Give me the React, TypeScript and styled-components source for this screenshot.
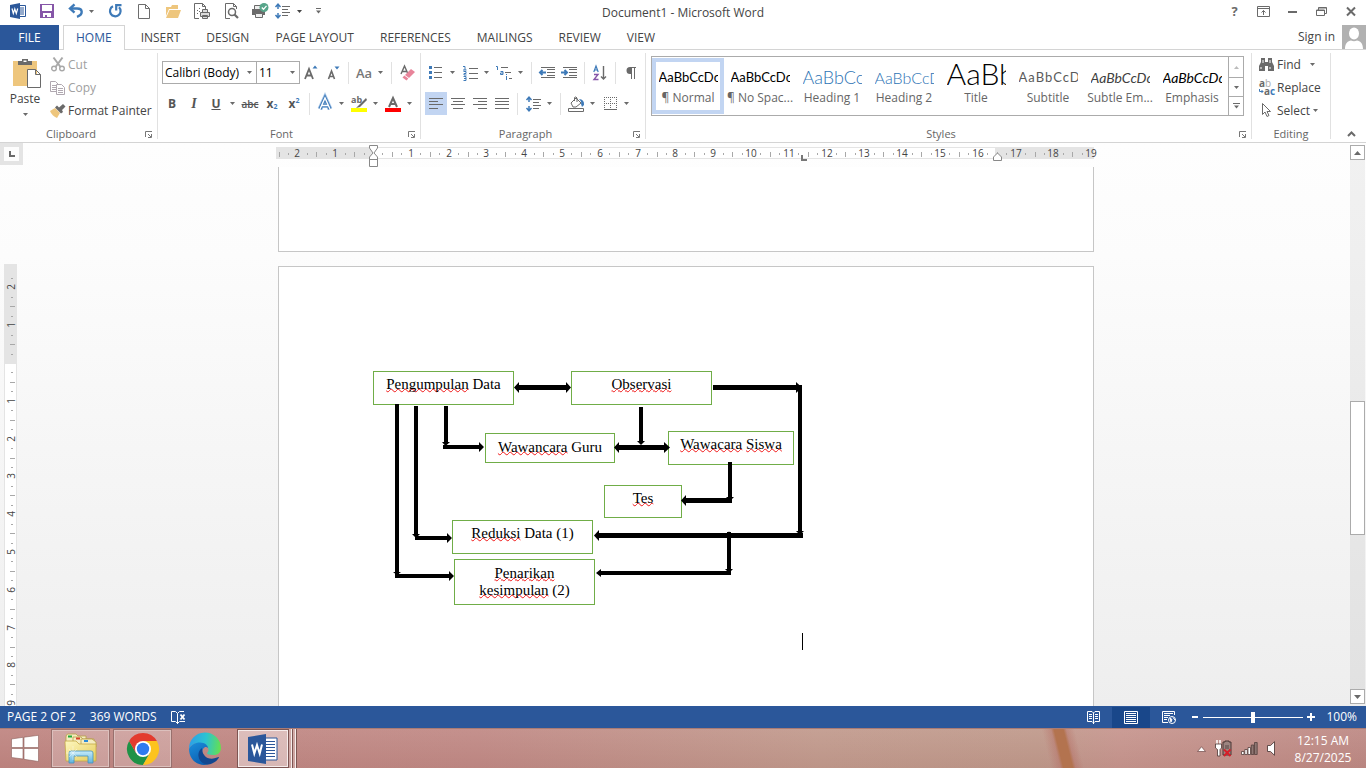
import React from "react";
import styled, { createGlobalStyle, css } from "styled-components";

const INK = "#444444";
const GREY = "#6a6a6a";
const BLUE = "#2b579a";
const ACCENT = "#3e7ab8";

const Global = createGlobalStyle`
  * { box-sizing: border-box; }
  html, body { margin: 0; height: 100%; overflow: hidden; }
  body { font-family: "Open Sans", "Noto Sans", sans-serif; font-size: 12px; line-height: 16px; color: ${INK}; }
  #root { height: 100%; }
  button, select, input { font: inherit; color: inherit; }
  svg { display: block; flex: none; overflow: visible; }
`;

/* ---------- shared parts ---------- */

const Window = styled.div`
  display: flex;
  flex-direction: column;
  height: 100vh;
  background: #fff;
`;

const PlainButton = styled.button`
  display: flex;
  align-items: center;
  justify-content: center;
  padding: 0;
  border: 0;
  background: transparent;
`;

const Caret = ({ color = GREY }: { color?: string }) => (
  <svg width="5" height="3" viewBox="0 0 5 3" fill={color}>
    <path d="M0 0H5L2.5 3Z" />
  </svg>
);

/* ---------- title bar ---------- */

const TitleBar = styled.header`
  display: grid;
  grid-template-columns: 1fr auto 1fr;
  align-items: center;
  height: 25px;
  flex: none;
`;

const QuickAccess = styled.div`
  display: flex;
  align-items: center;
  align-self: start;
  gap: 13px;
  padding-left: 10px;
  height: 22px;
`;

const QuickButton = styled(PlainButton)<{ $slim?: boolean }>`
  width: ${(p) => (p.$slim ? 6 : 16)}px;
  height: 22px;
`;

const QuickSet = styled.div<{ $gap: number }>`
  display: flex;
  align-items: center;
  gap: ${(p) => p.$gap}px;
`;

const Title = styled.h1`
  margin: 0;
  font-size: 12px;
  font-weight: 400;
`;

const WindowControls = styled.div`
  display: flex;
  align-self: start;
  justify-content: flex-end;
  height: 22px;
  padding-right: 1px;
`;

const WindowButton = styled(PlainButton)`
  width: 29px;
  font-weight: 700;
  font-size: 13px;
  color: ${GREY};
`;

const WordSmall = () => (
  <svg width="16" height="16" viewBox="0 0 16 16">
    <path d="M9 2.5H15.5V13.5H9Z" fill="#fff" stroke={BLUE} />
    <path d="M10 5H14M10 7H14M10 9H14M10 11H14" stroke={BLUE} />
    <path d="M0 2L10 0V16L0 14Z" fill={BLUE} />
    <path d="M2 5.5L3.3 10.5L4.8 6L6.3 10.5L7.7 5.5" fill="none" stroke="#fff" strokeWidth="1.2" />
  </svg>
);
const SaveIcon = () => (
  <svg width="14" height="14" viewBox="0 0 14 14">
    <path d="M0 0H14V14H0ZM2 1V7H12V1ZM3 9V13H5V11H7V13H11V9Z" fill="#8656a8" fillRule="evenodd" />
  </svg>
);
const UndoIcon = () => (
  <svg width="16" height="14" viewBox="0 0 16 14" fill="none" stroke={ACCENT} strokeWidth="2.400">
    <path d="M2 4.500H9C15 4.500 15.500 10.500 9 12.800" />
    <path d="M6.500 .3L2 4.500L6.500 8.700" />
  </svg>
);
const RedoIcon = () => (
  <svg width="15" height="14" viewBox="0 0 15 14" fill="none" stroke={ACCENT} strokeWidth="2.200">
    <path d="M5 2.200A5.300 5.300 0 1 0 11 3.200" />
    <path d="M8.200 6.500V1.200H13.500" />
  </svg>
);
const NewIcon = () => (
  <svg width="14" height="15" viewBox="0 0 14 15" fill="#fff" stroke="#6d6d6d">
    <path d="M1.500 .5H8.500L12.500 4.500V14.500H1.500ZM8.500 .5V4.500H12.500" />
  </svg>
);
const OpenIcon = () => (
  <svg width="16" height="13" viewBox="0 0 16 13" fill="#eec67d">
    <path d="M1 11V2H6L7 0H13V4H4Z" />
    <path d="M4.500 5H16L13 13H1Z" />
  </svg>
);
const QuickPrintIcon = () => (
  <svg width="16" height="16" viewBox="0 0 16 16" fill="none" stroke={GREY}>
    <path d="M5 15.500H.5V.5H8.500L11.500 3.500V6M8.500 .5V3.500H11.500" />
    <path d="M3 7.500H4M3 10.500H4M5 8.500H6M5 5.500H6" />
    <path d="M6.500 9.500H15.500V13.500H6.500ZM8.500 9.500V6.500H13.500V9.500M8.500 12.500H13.500V15.500H8.500Z" fill="#ddd" />
  </svg>
);
const PreviewIcon = () => (
  <svg width="15" height="16" viewBox="0 0 15 16" fill="none" stroke={GREY}>
    <path d="M6 15.500H1.500V.5H9.500L12.500 3.500V6M9.500 .5V3.500H12.500" />
    <circle cx="8" cy="9" r="3.500" strokeWidth="1.500" />
    <path d="M10.500 11.500L14 15" strokeWidth="2.200" />
  </svg>
);
const PrintCheckIcon = () => (
  <svg width="17" height="16" viewBox="0 0 17 16">
    <path d="M0 6H13V12H0Z" fill={GREY} />
    <path d="M2.500 6V2.500H9.500V6M3.500 10.500H10.500V14.500H3.500Z" fill="#eee" stroke={GREY} />
    <circle cx="12" cy="4.500" r="4.500" fill="#57a58a" />
    <path d="M9.800 4.500L11.500 6.300L14.500 2.800" fill="none" stroke="#fff" strokeWidth="1.300" />
  </svg>
);
const LineSpacingIcon = () => (
  <svg width="15" height="16" viewBox="0 0 15 16" fill="none">
    <path d="M3 2V6M3 10V14M.5 4L3 1.200L5.500 4M.5 12L3 14.800L5.500 12" stroke={ACCENT} strokeWidth="1.500" />
    <path d="M7 3.500H15M7 6.500H13M7 9.500H15M7 12.500H13" stroke={GREY} />
  </svg>
);

function TopBar() {
  return (
    <TitleBar>
      <QuickAccess>
        <QuickButton aria-label="Word menu"><WordSmall /></QuickButton>
        <QuickButton aria-label="Save"><SaveIcon /></QuickButton>
        <QuickSet $gap={4}>
          <QuickButton aria-label="Undo"><UndoIcon /></QuickButton>
          <QuickButton $slim aria-label="Undo history"><Caret /></QuickButton>
        </QuickSet>
        <QuickButton aria-label="Repeat"><RedoIcon /></QuickButton>
        <QuickButton aria-label="New"><NewIcon /></QuickButton>
        <QuickButton aria-label="Open"><OpenIcon /></QuickButton>
        <QuickButton aria-label="Quick print"><QuickPrintIcon /></QuickButton>
        <QuickButton aria-label="Print preview"><PreviewIcon /></QuickButton>
        <QuickSet $gap={6}>
          <QuickButton aria-label="Print and check"><PrintCheckIcon /></QuickButton>
          <QuickButton aria-label="Line spacing"><LineSpacingIcon /></QuickButton>
          <QuickButton $slim aria-label="Line spacing options"><Caret color={INK} /></QuickButton>
        </QuickSet>
        <QuickButton $slim aria-label="Customize toolbar">
          <svg width="7" height="6" viewBox="0 0 7 6">
            <path d="M1 .5H6" stroke={GREY} />
            <path d="M1 2.500H6L3.500 5.500Z" fill={GREY} />
          </svg>
        </QuickButton>
      </QuickAccess>
      <Title>Document1 - Microsoft Word</Title>
      <WindowControls>
        <WindowButton aria-label="Help">?</WindowButton>
        <WindowButton aria-label="Ribbon display options">
          <svg width="13" height="11" viewBox="0 0 13 11" fill="none" stroke={GREY}>
            <path d="M.5 .5H12.500V10.500H.5ZM.5 2.500H12.500M6.500 9V4.500M4.500 6.500L6.500 4.500L8.500 6.500" />
          </svg>
        </WindowButton>
        <WindowButton aria-label="Minimize">
          <svg width="9" height="3" viewBox="0 0 9 3"><path d="M0 1H9V3H0Z" fill={GREY} /></svg>
        </WindowButton>
        <WindowButton aria-label="Restore">
          <svg width="11" height="9" viewBox="0 0 11 9" fill="none" stroke={GREY}>
            <path d="M.5 3H8.500V8.500H.5ZM.5 3.500H8.500M2.500 3V.5H10.500V6.500H8.500M2.500 1H10.500" />
          </svg>
        </WindowButton>
        <WindowButton aria-label="Close">
          <svg width="10" height="9" viewBox="0 0 10 9"><path d="M1 .5L9 8.500M9 .5L1 8.500" stroke={GREY} strokeWidth="2" /></svg>
        </WindowButton>
      </WindowControls>
    </TitleBar>
  );
}

/* ---------- ribbon tabs ---------- */

const TabStrip = styled.nav`
  display: flex;
  height: 25px;
  flex: none;
  border-bottom: 1px solid #d4d4d4;
`;

const Tab = styled.button<{ $kind?: "file" | "active" }>`
  height: 25px;
  padding: 0 13px;
  border: 0;
  background: transparent;
  white-space: nowrap;
  ${(p) =>
    p.$kind === "file" &&
    css`
      width: 59px;
      margin-right: 4px;
      background: ${BLUE};
      color: #fff;
    `}
  ${(p) =>
    p.$kind === "active" &&
    css`
      padding: 0 12px;
      margin-right: 3px;
      border: 1px solid #d4d4d4;
      border-bottom: 0;
      background: #fff;
      color: ${BLUE};
    `}
`;

const Account = styled.div`
  display: flex;
  align-items: center;
  gap: 7px;
  margin-left: auto;
`;

const SignIn = styled.a`
  color: ${INK};
  text-decoration: none;
`;

function Tabs() {
  return (
    <TabStrip>
      <Tab $kind="file">FILE</Tab>
      <Tab $kind="active">HOME</Tab>
      {["INSERT", "DESIGN", "PAGE LAYOUT", "REFERENCES", "MAILINGS", "REVIEW", "VIEW"].map((t) => (
        <Tab key={t}>{t}</Tab>
      ))}
      <Account>
        <SignIn href="#signin">Sign in</SignIn>
        <svg width="24" height="24" viewBox="0 0 24 24">
          <path d="M0 0H24V24H0Z" fill="#b1b1b1" />
          <ellipse cx="12" cy="8.500" rx="5" ry="6" fill="#fff" />
          <path d="M3 24C3 18 6 16 9 15.500Q12 17 15 15.500C18 16 21 18 21 24Z" fill="#fff" />
        </svg>
      </Account>
    </TabStrip>
  );
}

/* ---------- ribbon ---------- */

const Ribbon = styled.section`
  display: flex;
  flex: none;
  height: 93px;
  padding: 3px 0;
  border-bottom: 1px solid #d4d4d4;
`;

const GroupBox = styled.section<{ $width?: number }>`
  display: flex;
  flex-direction: column;
  border-right: 1px solid #e1e1e1;
  ${(p) => (p.$width ? `width: ${p.$width}px; flex: none;` : "flex: 1; min-width: 0;")}
`;

const GroupBody = styled.div<{ $column?: boolean; $pad?: string }>`
  display: flex;
  flex-direction: ${(p) => (p.$column ? "column" : "row")};
  flex: 1;
  gap: ${(p) => (p.$column ? 8 : 0)}px;
  padding: ${(p) => p.$pad ?? "0"};
`;

const GroupFooter = styled.footer`
  display: flex;
  align-items: center;
  height: 10px;
  line-height: 10px;
  font-size: 11px;
  text-align: center;
  color: #666;
`;

const GroupName = styled.span`
  flex: 1;
`;

const Launcher = styled(PlainButton)`
  width: 15px;
  padding-right: 1px;
`;

const LauncherIcon = () => (
  <svg width="8" height="7" viewBox="0 0 8 7" fill="none" stroke="#777">
    <path d="M.5 6V.5H7M3 3L6 6M6.500 3V6.500H3" />
  </svg>
);

function Group(props: {
  label: string;
  width?: number;
  column?: boolean;
  pad?: string;
  launcher?: boolean;
  children: React.ReactNode;
}) {
  return (
    <GroupBox $width={props.width} aria-label={props.label}>
      <GroupBody $column={props.column} $pad={props.pad}>
        {props.children}
      </GroupBody>
      <GroupFooter>
        <GroupName>{props.label}</GroupName>
        {props.launcher && (
          <Launcher aria-label={`${props.label} settings`}>
            <LauncherIcon />
          </Launcher>
        )}
      </GroupFooter>
    </GroupBox>
  );
}

const PasteButton = styled(PlainButton)`
  flex-direction: column;
  justify-content: flex-start;
  width: 50px;
  height: 70px;
  padding-top: 5px;
`;

const PasteLabel = styled.span`
  margin: 2px 0 6px;
`;

const CommandList = styled.div`
  display: flex;
  flex-direction: column;
`;

const Command = styled.button<{ $muted?: boolean }>`
  display: flex;
  align-items: center;
  gap: 3px;
  height: 23px;
  padding: 0;
  border: 0;
  background: transparent;
  white-space: nowrap;
  color: ${(p) => (p.$muted ? "#a0a0a0" : INK)};
`;

const CommandIcon = styled.span`
  display: flex;
  justify-content: center;
  width: 15px;
`;

const CommandCaret = styled.span<{ $gap: number }>`
  padding-left: ${(p) => p.$gap}px;
`;

function Clipboard() {
  return (
    <Group label="Clipboard" width={158} launcher>
      <PasteButton>
        <svg width="33" height="31" viewBox="-4 0 33 31">
          <path d="M0 3H24V28H0Z" fill="#eec67d" />
          <path d="M5 7V3H9V1H15V3H19V7Z" fill={GREY} />
          <path d="M10.500 2.500H13.500V4H10.500Z" fill="#fff" />
          <path d="M14.500 11.500H22.500L27.500 16.500V29.500H14.500ZM22.500 11.500V16.500H27.500" fill="#fff" stroke={GREY} />
        </svg>
        <PasteLabel>Paste</PasteLabel>
        <Caret />
      </PasteButton>
      <CommandList>
        <Command $muted>
          <CommandIcon>
            <svg width="14" height="15" viewBox="0 0 14 15" fill="none" stroke="#a8a8a8" strokeWidth="1.400">
              <path d="M2.500 .5L9.500 10M11.500 .5L4.500 10" strokeWidth="2" />
              <circle cx="3" cy="11.500" r="2.300" />
              <circle cx="11" cy="11.500" r="2.300" />
            </svg>
          </CommandIcon>
          Cut
        </Command>
        <Command $muted>
          <CommandIcon>
            <svg width="15" height="14" viewBox="0 0 15 14" fill="#fff" stroke="#b0a8b0">
              <path d="M.5 .5H5.500L8.500 3.500V10.500H.5ZM2 4.500H6M2 6.500H6M2 8.500H6" />
              <path d="M6.500 3.500H11.500L14.500 6.500V13.500H6.500ZM8 7.500H13M8 9.500H13M8 11.500H13" />
            </svg>
          </CommandIcon>
          Copy
        </Command>
        <Command>
          <CommandIcon>
            <svg width="16" height="14" viewBox="0 0 16 14">
              <path d="M0 7L5 4L10 9L7 14Q2 12 0 7Z" fill="#eec67d" />
              <path d="M5 3.500L7 1.500L9 3.500L13 0L15.500 2.500L12 6L13 8L11 9.500Z" fill={GREY} />
            </svg>
          </CommandIcon>
          Format Painter
        </Command>
      </CommandList>
    </Group>
  );
}

const ToolRow = styled.div`
  display: flex;
  align-items: center;
  height: 23px;
`;

const Tool = styled.button<{ $on?: boolean }>`
  display: flex;
  align-items: center;
  justify-content: center;
  width: 22px;
  height: 23px;
  padding: 0;
  border: 0;
  font-size: 13px;
  color: #555;
  background: ${(p) => (p.$on ? "#c2d5f2" : "transparent")};
`;

const SplitCaret = styled(Tool)`
  width: 10px;
  margin-right: 2px;
`;

const ToolSeparator = styled.span`
  width: 1px;
  height: 22px;
  margin: 0 4px;
  background: #e1e1e1;
`;

const ComboPair = styled.div`
  display: flex;
  margin: 0 1px;
`;

const Combo = styled.label<{ $width: number }>`
  position: relative;
  width: ${(p) => p.$width}px;
  height: 23px;
  margin-right: -1px;
`;

const ComboSelect = styled.select`
  appearance: none;
  width: 100%;
  height: 23px;
  padding: 0 2px;
  border: 1px solid #ababab;
  border-radius: 0;
  background: #fff;
  color: #000;
`;

const ComboCaret = styled.span`
  position: absolute;
  right: 5px;
  top: 10px;
  pointer-events: none;
`;

const GlyphBold = styled.span`
  font-weight: 700;
  font-size: 12px;
`;
const GlyphItalic = styled.span`
  font: italic 700 14px "Liberation Serif", serif;
`;
const GlyphUnderline = styled.span`
  font-weight: 700;
  font-size: 12px;
  text-decoration: underline;
`;
const GlyphStrike = styled.span`
  font-weight: 600;
  font-size: 10px;
  text-decoration: line-through;
`;
const GlyphScript = styled.span<{ $up?: boolean }>`
  display: flex;
  align-items: ${(p) => (p.$up ? "flex-start" : "flex-end")};
  font-weight: 700;
  font-size: 12px;
  line-height: 14px;
  small {
    font-size: 7px;
    line-height: 8px;
    color: ${ACCENT};
  }
`;
const GlyphCase = styled.span`
  font-size: 13px;
  font-weight: 600;
  color: #777;
`;

function Split({ label, children }: { label: string; children: React.ReactNode }) {
  return (
    <>
      <Tool aria-label={label}>{children}</Tool>
      <SplitCaret aria-label={`${label} options`}>
        <Caret />
      </SplitCaret>
    </>
  );
}

function FontGroup() {
  return (
    <Group label="Font" width={263} column pad="8px 0 0 3px" launcher>
      <ToolRow>
        <ComboPair>
          <Combo $width={95}>
            <ComboSelect aria-label="Font" defaultValue="Calibri (Body)">
              <option>Calibri (Body)</option>
            </ComboSelect>
            <ComboCaret><Caret /></ComboCaret>
          </Combo>
          <Combo $width={44}>
            <ComboSelect aria-label="Font size" defaultValue="11">
              <option>11</option>
            </ComboSelect>
            <ComboCaret><Caret /></ComboCaret>
          </Combo>
        </ComboPair>
        <Tool aria-label="Grow font">
          <svg width="14" height="15" viewBox="0 0 14 15">
            <path d="M1 14L5 4L9 14M2.500 10.500H7.500" fill="none" stroke={GREY} strokeWidth="1.800" />
            <path d="M8.500 3.500L11 .5L13.500 3.500Z" fill={ACCENT} />
          </svg>
        </Tool>
        <Tool aria-label="Shrink font">
          <svg width="13" height="15" viewBox="0 0 13 15">
            <path d="M1.500 14L4.500 6L7.500 14M2.500 11.500H6.500" fill="none" stroke={GREY} strokeWidth="1.600" />
            <path d="M7.500 1.500H12.500L10 4.500Z" fill={ACCENT} />
          </svg>
        </Tool>
        <ToolSeparator />
        <Split label="Change case"><GlyphCase>Aa</GlyphCase></Split>
        <ToolSeparator />
        <Tool aria-label="Clear formatting">
          <svg width="15" height="16" viewBox="0 0 15 16">
            <path d="M1 9L4.500 1L8 9M2 6.500H7" fill="none" stroke={GREY} strokeWidth="1.400" />
            <path d="M11 4L15 7L9 13L5 10Z" fill="#e8849a" />
            <path d="M4.300 10.600L8.300 13.600L6.500 15.500L2.500 12.500Z" fill="#e8849a" />
          </svg>
        </Tool>
      </ToolRow>
      <ToolRow>
        <Tool aria-label="Bold"><GlyphBold>B</GlyphBold></Tool>
        <Tool aria-label="Italic"><GlyphItalic>I</GlyphItalic></Tool>
        <Split label="Underline"><GlyphUnderline>U</GlyphUnderline></Split>
        <Tool aria-label="Strikethrough"><GlyphStrike>abc</GlyphStrike></Tool>
        <Tool aria-label="Subscript"><GlyphScript>x<small>2</small></GlyphScript></Tool>
        <Tool aria-label="Superscript"><GlyphScript $up>x<small>2</small></GlyphScript></Tool>
        <ToolSeparator />
        <Split label="Text effects">
          <svg width="14" height="15" viewBox="0 0 14 15" fill="none">
            <path d="M2 13L7 2L12 13M4 9.500H10" stroke="#a9c8ea" strokeWidth="5" />
            <path d="M2 13L7 2L12 13M4 9.500H10" stroke={ACCENT} strokeWidth="3.400" />
            <path d="M2 13L7 2L12 13M4 9.500H10" stroke="#fff" strokeWidth="1.400" />
          </svg>
        </Split>
        <Split label="Text highlight color">
          <svg width="16" height="16" viewBox="0 0 16 16">
            <text x="0" y="7" fontSize="9" fontWeight="700" fill={GREY}>ab</text>
            <path d="M15 2L8 9L5 12L9 11L16 4Z" fill={GREY} />
            <path d="M0 12H16V16H0Z" fill="#ffff00" />
          </svg>
        </Split>
        <Split label="Font color">
          <svg width="16" height="16" viewBox="0 0 16 16">
            <path d="M4 11L8 2L12 11M5.500 8H10.500" fill="none" stroke={GREY} strokeWidth="2" />
            <path d="M0 12H16V16H0Z" fill="#ff0000" />
          </svg>
        </Split>
      </ToolRow>
    </Group>
  );
}

const AlignIcon = ({ d }: { d: string }) => (
  <svg width="14" height="11" viewBox="0 0 14 11" stroke={GREY}>
    <path d={d} />
  </svg>
);

const IndentIcon = ({ flip }: { flip?: boolean }) => (
  <svg width="16" height="11" viewBox="0 0 16 11" fill="none">
    <path d="M2 .5H16M8 2.500H16M8 5.500H16M8 8.500H16M2 10.500H16" stroke={GREY} />
    <path
      d={flip ? "M0 5.500H6M3.500 3L6 5.500L3.500 8" : "M1 5.500H7M3.500 3L1 5.500L3.500 8"}
      stroke={ACCENT}
      strokeWidth="2"
    />
  </svg>
);

function ParagraphGroup() {
  return (
    <Group label="Paragraph" width={225} column pad="8px 0 0 4px" launcher>
      <ToolRow>
        <Split label="Bullets">
          <svg width="14" height="15" viewBox="0 0 14 15">
            <path d="M5 2.500H13M5 7.500H13M5 12.500H13" stroke={GREY} />
            <path d="M0 1H3V4H0ZM0 6H3V9H0ZM0 11H3V14H0Z" fill={ACCENT} />
          </svg>
        </Split>
        <Split label="Numbering">
          <svg width="15" height="16" viewBox="0 0 15 16">
            <path d="M6 3.500H15M6 8.500H15M6 13.500H15" stroke={GREY} />
            <path
              d="M0 1.500H2V5M0 5H3.500M.5 6.500H3V8.500H1V10H3.500M.5 11.500H3V15.500H.5M1 13.500H3"
              fill="none"
              stroke={ACCENT}
            />
          </svg>
        </Split>
        <Split label="Multilevel list">
          <svg width="16" height="16" viewBox="0 0 16 16">
            <path d="M5 2.500H12M9 7.500H15M13 13.500H16" stroke={GREY} />
            <path
              d="M0 1.500H1.500V5M4.500 6.500H7V9.500H4.500V8H7M10.500 11V15M10.500 9V10"
              fill="none"
              stroke={ACCENT}
            />
          </svg>
        </Split>
        <ToolSeparator />
        <Tool aria-label="Decrease indent"><IndentIcon /></Tool>
        <Tool aria-label="Increase indent"><IndentIcon flip /></Tool>
        <ToolSeparator />
        <Tool aria-label="Sort">
          <svg width="14" height="16" viewBox="0 0 14 16" fill="none">
            <path d="M.8 7L3 1L5.200 7M1.500 5H4.500" stroke={ACCENT} strokeWidth="1.200" />
            <path d="M1 9.500H5L1 14.500H5.500" stroke="#8656a8" strokeWidth="1.400" />
            <path d="M10.500 1V14M8 11.500L10.500 14L13 11.500" stroke={GREY} strokeWidth="1.400" />
          </svg>
        </Tool>
        <ToolSeparator />
        <Tool aria-label="Show formatting marks">
          <svg width="11" height="12" viewBox="0 0 11 12">
            <path d="M4 7A3.500 3.500 0 0 1 4 0H10V1H9V12H8V1H6V12H5V7Z" fill={GREY} />
          </svg>
        </Tool>
      </ToolRow>
      <ToolRow>
        <Tool $on aria-label="Align left"><AlignIcon d="M0 .5H14M0 3.500H9M0 6.500H14M0 10.500H9" /></Tool>
        <Tool aria-label="Center"><AlignIcon d="M0 .5H14M2 3.500H12M0 6.500H14M2 10.500H12" /></Tool>
        <Tool aria-label="Align right"><AlignIcon d="M0 .5H14M5 3.500H14M0 6.500H14M5 10.500H14" /></Tool>
        <Tool aria-label="Justify"><AlignIcon d="M0 .5H14M0 3.500H14M0 6.500H14M0 10.500H14" /></Tool>
        <ToolSeparator />
        <Split label="Line and paragraph spacing"><LineSpacingIcon /></Split>
        <ToolSeparator />
        <Split label="Shading">
          <svg width="17" height="16" viewBox="0 0 17 16" fill="none">
            <path d="M3 7L8 2L13 7L8 11H5ZM6.500 5V1.500Q8 0 9 2V6" stroke={GREY} />
            <path d="M11 3Q16.500 3.500 16 9L14 11L13 8Q14 6 11 3Z" fill={ACCENT} />
            <path d="M.5 12.500H15.500V15.500H.5Z" stroke={GREY} />
          </svg>
        </Split>
        <Split label="Borders">
          <svg width="13" height="13" viewBox="0 0 13 13" fill="none" stroke={GREY}>
            <path d="M.5 0V12M6.500 0V12M12.500 0V12M0 .5H13M0 6.500H13" strokeDasharray="1 1" />
            <path d="M0 12.500H13" />
          </svg>
        </Split>
      </ToolRow>
    </Group>
  );
}

const Gallery = styled.div`
  display: flex;
  flex: 1;
  min-width: 0;
  height: 60px;
  border: 1px solid #ababab;
  background: #fff;
`;

const GalleryItems = styled.div`
  display: flex;
  flex: 1;
  overflow: hidden;
`;

const StyleCard = styled.button<{ $on?: boolean }>`
  display: flex;
  flex-direction: column;
  align-items: center;
  flex: none;
  width: 72px;
  height: 56px;
  margin-top: 1px;
  padding: 0;
  border: 4px solid ${(p) => (p.$on ? "#c2d5f2" : "transparent")};
  background: transparent;
  color: #666;
  white-space: nowrap;
`;

const Sample = styled.span<{ $size: number; $color: string; $italic?: boolean; $light?: boolean; $wide?: boolean }>`
  width: 59px;
  height: 25px;
  margin-bottom: 3px;
  overflow: hidden;
  text-align: left;
  font-family: Lato, "Open Sans", sans-serif;
  font-size: ${(p) => p.$size}px;
  font-weight: ${(p) => (p.$light ? 300 : 400)};
  font-style: ${(p) => (p.$italic ? "italic" : "normal")};
  letter-spacing: ${(p) => (p.$wide ? "1px" : "normal")};
  line-height: ${(p) => (p.$size > 20 ? 23 : 31)}px;
  color: ${(p) => p.$color};
`;

const STYLES = [
  { name: "¶ Normal", sample: "AaBbCcDc", size: 13, color: "#000", on: true },
  { name: "¶ No Spac...", sample: "AaBbCcDc", size: 13, color: "#000" },
  { name: "Heading 1", sample: "AaBbCc", size: 18, color: "#2e74b5", light: true },
  { name: "Heading 2", sample: "AaBbCcD", size: 16, color: "#2e74b5", light: true },
  { name: "Title", sample: "AaBb", size: 30, color: "#000", light: true },
  { name: "Subtitle", sample: "AaBbCcD", size: 13, color: "#5a5a5a", wide: true },
  { name: "Subtle Em...", sample: "AaBbCcDc", size: 14, color: "#404040", italic: true },
  { name: "Emphasis", sample: "AaBbCcDc", size: 14, color: "#000", italic: true },
];

const GalleryScroll = styled.div`
  display: grid;
  grid-template-rows: 20px 19px 19px;
  width: 15px;
  border-left: 1px solid #ababab;
`;

const GalleryButton = styled(PlainButton)`
  & + & {
    border-top: 1px solid #ababab;
  }
`;

function StylesGroup() {
  return (
    <Group label="Styles" pad="3px 7px 0 5px" launcher>
      <Gallery>
        <GalleryItems>
          {STYLES.map((s) => (
            <StyleCard key={s.name} $on={s.on}>
              <Sample $size={s.size} $color={s.color} $italic={s.italic} $light={s.light} $wide={s.wide}>
                {s.sample}
              </Sample>
              {s.name}
            </StyleCard>
          ))}
        </GalleryItems>
        <GalleryScroll>
          <GalleryButton aria-label="Previous styles">
            <svg width="5" height="3" viewBox="0 0 5 3"><path d="M0 3H5L2.500 0Z" fill="#bbb" /></svg>
          </GalleryButton>
          <GalleryButton aria-label="Next styles"><Caret /></GalleryButton>
          <GalleryButton aria-label="More styles">
            <svg width="7" height="6" viewBox="0 0 7 6">
              <path d="M0 .5H7" stroke={GREY} />
              <path d="M1 2.500H6L3.500 5.500Z" fill={GREY} />
            </svg>
          </GalleryButton>
        </GalleryScroll>
      </Gallery>
    </Group>
  );
}

function EditingGroup() {
  return (
    <Group label="Editing" width={79} pad="0 0 0 7px">
      <CommandList>
        <Command>
          <CommandIcon>
            <svg width="15" height="13" viewBox="0 0 15 13" fill={GREY}>
              <path d="M2 0H6V4H9V0H13V4L15 8V13H9V8H6V13H0V8L2 4Z" />
              <path d="M2 9V11M11 9V11M4 2V5M11 2V5" stroke="#fff" />
            </svg>
          </CommandIcon>
          Find
          <CommandCaret $gap={6}><Caret /></CommandCaret>
        </Command>
        <Command>
          <CommandIcon>
            <svg width="16" height="15" viewBox="0 0 16 15" fontSize="10">
              <text x="0" y="7" fontWeight="700" fill={GREY}>a</text>
              <text x="6" y="7" fill="#aaa">b</text>
              <text x="5" y="15" fontWeight="700" fill={GREY}>a</text>
              <text x="11" y="15" fontWeight="700" fill={ACCENT}>c</text>
              <path d="M.5 9V11.500H4M2.500 10L4 11.500L2.500 13" fill="none" stroke={ACCENT} />
            </svg>
          </CommandIcon>
          Replace
        </Command>
        <Command>
          <CommandIcon>
            <svg width="9" height="15" viewBox="0 0 9 15">
              <path d="M.5 .5V11.500L3 9L5 13.500L7 12.500L5 8.500H8.500Z" fill="#fff" stroke={GREY} />
            </svg>
          </CommandIcon>
          Select
          <CommandCaret $gap={0}><Caret /></CommandCaret>
        </Command>
      </CommandList>
    </Group>
  );
}

const CollapseArea = styled.div`
  display: flex;
  align-items: flex-end;
  justify-content: flex-end;
  width: 35px;
  padding: 0 10px 2px 0;
`;

/* ---------- workspace ---------- */

const Workspace = styled.main`
  display: grid;
  grid-template-columns: 23px minmax(0, 1fr) 17px;
  flex: 1;
  min-height: 0;
  background: linear-gradient(#fefefe, #fcfcfc 20%, #eeeeee);
`;

const LeftRail = styled.div`
  display: flex;
  flex-direction: column;
  overflow: hidden;
`;

const TabCorner = styled.div`
  width: 23px;
  height: 22px;
  flex: none;
  padding: 4px;
  background: #e4e4e4;
  margin-bottom: 99px;
`;

const TabSelector = styled(PlainButton)`
  width: 15px;
  height: 14px;
  background: #fdfdfd;
`;

const VerticalRulerBox = styled.div`
  flex: 1;
  min-height: 0;
  padding-left: 4px;
  overflow: hidden;
`;

const RulerSvg = styled.svg`
  font-family: "Open Sans", sans-serif;
  font-size: 10px;
  text-anchor: middle;
`;

const CM = 37.8;

function rulerMarks(from: number, to: number) {
  const marks: { pos: number; kind: "number" | "half" | "quarter"; label: string }[] = [];
  for (let q = from * 4; q <= to * 4; q++) {
    if (q === 0) continue;
    const kind = q % 4 === 0 ? "number" : q % 2 === 0 ? "half" : "quarter";
    marks.push({ pos: Math.round((q * CM) / 4), kind, label: String(Math.abs(q / 4)) });
  }
  return marks;
}

function HorizontalRuler() {
  return (
    <RulerSvg width="822" height="24" viewBox="0 0 822 24" role="img" aria-label="Horizontal ruler">
      <path d="M0 4H818V16H0Z" fill="#e4e4e4" />
      <path d="M97 5H719V15H97Z" fill="#fff" />
      {rulerMarks(-2.5, 19).map((m) =>
        m.kind === "number" ? (
          <text key={m.pos} x={97 + m.pos} y="14" fill="#444">{m.label}</text>
        ) : (
          <rect key={m.pos} x={97 + m.pos} y={m.kind === "half" ? 9 : 10} width="1" height={m.kind === "half" ? 5 : 2} fill="#a8a8a8" />
        )
      )}
      <path d="M93.500 2.500H101.500V5L98 10L101.500 14V23.500H93.500V14L97 10L93.500 5ZM93.500 16.500H101.500" fill="#fff" stroke="#888" />
      <path d="M717.500 17.500V14L721.500 10L725.500 14V17.500Z" fill="#fff" stroke="#888" />
      <path d="M525 12H527V16H531V18H525Z" fill="#777" />
    </RulerSvg>
  );
}

function VerticalRuler() {
  return (
    <RulerSvg width="13" height="480" viewBox="0 0 13 480" role="img" aria-label="Vertical ruler">
      <path d="M0 0H13V480H0Z" fill="#e4e4e4" />
      <path d="M1 100H12V480H1Z" fill="#fff" />
      {rulerMarks(-2.25, 9).map((m) =>
        m.kind === "number" ? (
          <text key={m.pos} transform={`translate(11 ${99 + m.pos}) rotate(-90)`} fill="#444">{m.label}</text>
        ) : (
          <rect key={m.pos} x={m.kind === "half" ? 6 : 7} y={99 + m.pos} width={m.kind === "half" ? 5 : 2} height="1" fill="#a8a8a8" />
        )
      )}
    </RulerSvg>
  );
}

const DocumentColumn = styled.div`
  display: flex;
  flex-direction: column;
  align-items: center;
  min-width: 0;
  overflow: hidden;
`;

const RulerRow = styled.div`
  width: 820px;
  height: 24px;
  flex: none;
`;

const Sheet = styled.article<{ $tail?: boolean }>`
  width: 816px;
  flex: none;
  border: 1px solid #c6c6c6;
  background: #fff;
  ${(p) =>
    p.$tail
      ? css`
          height: 85px;
          margin-bottom: 14px;
          border-top: 0;
        `
      : css`
          height: 1056px;
          padding: 94px;
        `}
`;

/* ---------- diagram ---------- */

const Canvas = styled.div`
  position: relative;
  width: 440px;
  height: 300px;
`;

const Node = styled.div<{ $x: number; $y: number; $w: number; $h: number; $pad?: number }>`
  position: absolute;
  left: ${(p) => p.$x}px;
  top: ${(p) => p.$y}px;
  width: ${(p) => p.$w}px;
  height: ${(p) => p.$h}px;
  padding-top: ${(p) => p.$pad ?? 4}px;
  border: 1px solid #70ad47;
  background: #fff;
  color: #000;
  font: 15px/17px "Liberation Serif", serif;
  text-align: center;
`;

const Misspelt = styled.span`
  text-decoration: underline wavy #f01818 1px;
  text-decoration-skip-ink: none;
  text-underline-offset: -1px;
`;

const Connectors = styled.svg`
  position: absolute;
  left: 0;
  top: 0;
`;

const TextCursor = styled.span`
  position: absolute;
  left: 429px;
  top: 272px;
  width: 1px;
  height: 17px;
  background: #000;
`;

function Diagram() {
  return (
    <Canvas>
      <Node $x={0} $y={10} $w={141} $h={34}><Misspelt>Pengumpulan</Misspelt> Data</Node>
      <Node $x={198} $y={10} $w={141} $h={34}><Misspelt>Observasi</Misspelt></Node>
      <Node $x={112} $y={72} $w={130} $h={30} $pad={5}><Misspelt>Wawancara</Misspelt> Guru</Node>
      <Node $x={295} $y={70} $w={126} $h={34}><Misspelt>Wawacara</Misspelt> <Misspelt>Siswa</Misspelt></Node>
      <Node $x={231} $y={124} $w={78} $h={33}><Misspelt>Tes</Misspelt></Node>
      <Node $x={79} $y={159} $w={141} $h={34}><Misspelt>Reduksi</Misspelt> Data (1)</Node>
      <Node $x={81} $y={198} $w={141} $h={46} $pad={5}>
        <Misspelt>Penarikan</Misspelt>
        <br />
        <Misspelt>kesimpulan</Misspelt> (2)
      </Node>
      <Connectors width="440" height="300" viewBox="0 0 440 300" aria-hidden="true">
        <g fill="none" stroke="#000" strokeWidth="5">
          <path d="M145 26.500H194" />
          <path d="M340 26.500H425" />
          <path d="M245 86.500H292" />
          <path d="M312 139.500H359" />
          <path d="M225 174.500H430" />
        </g>
        <g fill="none" stroke="#000" strokeWidth="4">
          <path d="M427 24V172" />
          <path d="M356 171V210" />
          <path d="M226 212H358" />
          <path d="M73 45V83M70 86H107" />
          <path d="M43 45V175M42 177H75" />
          <path d="M24 43V213M22 215H77" />
          <path d="M268 46V82" />
          <path d="M357 101V138" />
        </g>
        <g fill="#000">
          <path d="M141 26.500L146 21V32ZM198 26.500L193 21V32Z" />
          <path d="M429 26.500L423 21V32Z" />
          <path d="M241 86.500L246 81V92ZM297 86.500L291 81V92Z" />
          <path d="M308 139.500L313 134V145Z" />
          <path d="M221 174.500L226 169V180Z" />
          <path d="M223 212L228 208V216Z" />
          <path d="M111 86L106 81V91ZM79 177L74 172V182ZM81 215L76 210V220Z" />
          <path d="M427 174L423 170H431ZM356 212L352 208H360ZM354 172L356 170.500L358 172V173H354Z" />
          <path d="M72.500 85L69 81H77ZM43 177L39 173H47ZM24 214L20 211H28ZM268 84L264 80H272ZM357 140L353 136H361Z" />
        </g>
      </Connectors>
      <TextCursor />
    </Canvas>
  );
}

/* ---------- scroll bar ---------- */

const ScrollColumn = styled.div`
  display: flex;
  flex-direction: column;
  padding: 2px 1px;
`;

const ScrollButton = styled(PlainButton)`
  height: 15px;
  flex: none;
  border: 1px solid #ababab;
  background: #fff;
`;

const ScrollTrack = styled.div`
  display: flex;
  flex-direction: column;
  flex: 1;
  background: rgba(0, 0, 0, 0.05);
`;

const ScrollGap = styled.div<{ $grow: number }>`
  flex: ${(p) => p.$grow};
`;

const ScrollThumb = styled.div`
  flex: 132;
  border: 1px solid #ababab;
  background: #fff;
`;

/* ---------- status bar ---------- */

const StatusBar = styled.footer`
  display: flex;
  align-items: center;
  height: 22px;
  flex: none;
  padding: 0 9px 0 7px;
  background: ${BLUE};
  color: #fff;
  font-size: 12px;
`;

const StatusText = styled.span`
  margin-right: 14px;
  white-space: nowrap;
`;

const StatusRight = styled.div`
  display: flex;
  align-items: center;
  height: 22px;
  margin-left: auto;
`;

const ViewButton = styled(PlainButton)<{ $on?: boolean }>`
  width: 38px;
  height: 21px;
  background: ${(p) => (p.$on ? "#19478a" : "transparent")};
`;

const ZoomButton = styled(PlainButton)`
  width: 14px;
  height: 21px;
`;

const ZoomRange = styled.input`
  appearance: none;
  width: 100px;
  height: 11px;
  margin: 0 1px;
  background: linear-gradient(#fff, #fff) center / 100% 1px no-repeat;
  &::-webkit-slider-thumb {
    appearance: none;
    width: 4px;
    height: 11px;
    background: #fff;
  }
`;

const ZoomValue = styled.span`
  width: 39px;
  text-align: right;
`;

function Status() {
  return (
    <StatusBar>
      <StatusText>PAGE 2 OF 2</StatusText>
      <StatusText>369 WORDS</StatusText>
      <PlainButton aria-label="Proofing errors">
        <svg width="15" height="13" viewBox="0 0 15 13" fill="none" stroke="#fff">
          <path d="M6.500 13V2.500L4.500 .5H.5V10.500H4.500L6.500 12.500L8.500 10.500H14M6.500 2.500L8.500 .5H13" />
          <path d="M9.500 3.500L13.500 8.500M13.500 3.500L9.500 8.500" strokeWidth="1.800" />
        </svg>
      </PlainButton>
      <StatusRight>
        <ViewButton aria-label="Read mode">
          <svg width="13" height="13" viewBox="0 0 13 13" fill="none" stroke="#fff">
            <path d="M.5 .5H5L6.500 2L8 .5H12.500V10.500H8L6.500 12L5 10.500H.5ZM6.500 2V13M2 3.500H5M2 5.500H5M2 7.500H5M8 3.500H11M8 5.500H11M8 7.500H11" />
          </svg>
        </ViewButton>
        <ViewButton $on aria-label="Print layout">
          <svg width="14" height="13" viewBox="0 0 14 13" fill="none" stroke="#fff">
            <path d="M.5 .5H13.500V12.500H.5ZM2 2.500H12M2 4.500H12M2 6.500H12M2 8.500H12M2 10.500H12" />
          </svg>
        </ViewButton>
        <ViewButton aria-label="Web layout">
          <svg width="14" height="13" viewBox="0 0 14 13" fill="none" stroke="#fff">
            <path d="M6 11.500H.5V.5H12.500V4M2 2.500H11M2 4.500H8M2 6.500H6M2 8.500H5" />
            <circle cx="10" cy="9" r="3.500" fill={BLUE} />
            <path d="M8 7L10 8.500L9 11ZM11 6.500L13 9" fill="#fff" />
          </svg>
        </ViewButton>
        <ZoomButton aria-label="Zoom out">
          <svg width="6" height="2" viewBox="0 0 6 2"><path d="M0 0H6V2H0Z" fill="#fff" /></svg>
        </ZoomButton>
        <ZoomRange type="range" aria-label="Zoom" min={0} max={200} defaultValue={100} />
        <ZoomButton aria-label="Zoom in">
          <svg width="8" height="8" viewBox="0 0 8 8"><path d="M3 0H5V3H8V5H5V8H3V5H0V3H3Z" fill="#fff" /></svg>
        </ZoomButton>
        <ZoomValue>100%</ZoomValue>
      </StatusRight>
    </StatusBar>
  );
}

/* ---------- taskbar ---------- */

const Taskbar = styled.footer`
  display: flex;
  align-items: stretch;
  height: 40px;
  flex: none;
  border-top: 1px solid #a97b74;
  background:
    linear-gradient(76deg, transparent 1020px, rgba(178, 100, 90, 0.35) 1029px, #b3734f 1032px, #b3734f 1041px, rgba(178, 100, 90, 0.35) 1044px, transparent 1052px),
    linear-gradient(rgba(255, 255, 255, 0.06), rgba(120, 70, 60, 0.08)),
    linear-gradient(90deg, #c08682, #c18a86 35%, #c29b8e 60%, #c09a8c 76%, #c7968f 82%, #be8a85);
`;

const StartButton = styled(PlainButton)`
  width: 50px;
  margin-right: 1px;
`;

const TaskButton = styled(PlainButton)<{ $state?: "open" | "active" }>`
  width: ${(p) => (p.$state === "active" ? 52 : 59)}px;
  margin-right: ${(p) => (p.$state === "active" ? 0 : 3)}px;
  ${(p) =>
    p.$state === "open" &&
    css`
      border: 1px solid #98706d;
      box-shadow: inset 0 0 0 1px #dcc0bd;
      background: rgba(255, 255, 255, 0.22);
    `}
  ${(p) =>
    p.$state === "active" &&
    css`
      border: 1px solid #7d5552;
      box-shadow: inset 0 0 0 1px #f6eceb;
      background: rgba(255, 255, 255, 0.42);
    `}
`;

const StackEdge = styled.span`
  width: 4px;
  border-right: 1px solid #7d5552;
  box-shadow: inset -1px 0 0 #f6eceb;
  background: rgba(255, 255, 255, 0.25);
`;

const Tray = styled.div`
  display: flex;
  align-items: center;
  gap: 9px;
  margin-left: auto;
  padding-right: 8px;
`;

const Clock = styled.time`
  width: 70px;
  margin-left: 3px;
  line-height: 17px;
  text-align: center;
  white-space: nowrap;
  color: #fff;
`;

function WindowsTaskbar() {
  return (
    <Taskbar>
      <StartButton aria-label="Start">
        <svg width="28" height="27" viewBox="0 0 28 27" fill="#fff" stroke="#8c5f5b" strokeWidth=".6">
          <path d="M.5 4L12 2.300V12.500H.5ZM13 2.200L27.500 .3V12.500H13ZM.5 13.500H12V24L.5 22.500ZM13 13.500H27.500V26.500L13 24.300Z" />
        </svg>
      </StartButton>
      <TaskButton $state="open" aria-label="File Explorer">
        <svg width="34" height="31" viewBox="0 0 34 31">
          <defs>
            <linearGradient id="folder" x1="0" y1="0" x2="1" y2="1">
              <stop offset="0" stopColor="#fdf7c0" />
              <stop offset="1" stopColor="#e6cc5a" />
            </linearGradient>
            <linearGradient id="stand" x1="0" y1="0" x2="0" y2="1">
              <stop offset="0" stopColor="#c5ebfa" />
              <stop offset="1" stopColor="#5fb3dd" />
            </linearGradient>
          </defs>
          <path d="M2 4Q2 1 4 1H12L14 3H22V10H2Z" fill="#f4ecc0" stroke="#b79f45" strokeWidth=".8" />
          <path d="M4 2.500H8V4.500H4Z" fill="#22a83a" />
          <path d="M9 4H17L19 6H30V12H9Z" fill="#f4ecc0" stroke="#b79f45" strokeWidth=".8" />
          <path d="M12 4.500H16V6.500H12Z" fill="#d8402a" />
          <path d="M17 6H28L32 9V14H17Z" fill="#f4ecc0" stroke="#b79f45" strokeWidth=".8" />
          <path d="M20 7H24V9H20Z" fill="#2a8ad8" />
          <path d="M1 9Q1 8 2 8H12L15 11H32V28H2Z" fill="url(#folder)" stroke="#c4a845" strokeWidth=".8" />
          <path d="M5 30V20Q5 18 7 18H27Q29 18 29 20V30H24V23H10V30Z" fill="url(#stand)" stroke="#4593bd" strokeWidth=".8" />
          <path d="M9 13V27M2 20H16M5 16L13 24M13 16L5 24" stroke="#fff" strokeWidth=".6" opacity=".7" />
        </svg>
      </TaskButton>
      <TaskButton $state="open" aria-label="Google Chrome">
        <svg width="32" height="32" viewBox="0 0 32 32">
          <path d="M16 16L22.900 20L16 32A16 16 0 0 1 2.140 8L9.100 20Z" fill="#1f9246" />
          <path d="M16 8H29.860A16 16 0 0 1 16 32L22.900 20Z" fill="#fcc31e" />
          <path d="M16 8H29.860A16 16 0 0 0 2.140 8L9.100 20L16 16Z" fill="#e33b2e" />
          <circle cx="16" cy="16" r="8" fill="#fff" />
          <circle cx="16" cy="16" r="6.200" fill="#2f7bee" />
        </svg>
      </TaskButton>
      <TaskButton aria-label="Microsoft Edge">
        <svg width="32" height="32" viewBox="0 0 32 32">
          <defs>
            <linearGradient id="edgeTop" x1="0" y1=".5" x2="1" y2=".6">
              <stop offset="0" stopColor="#2f9fe6" />
              <stop offset=".5" stopColor="#2bc3d2" />
              <stop offset="1" stopColor="#66e04e" />
            </linearGradient>
            <linearGradient id="edgeLeft" x1="0" y1="0" x2=".6" y2="1">
              <stop offset="0" stopColor="#1b8fdc" />
              <stop offset="1" stopColor="#0b5cae" />
            </linearGradient>
          </defs>
          <path d="M0 16A16 16 0 0 1 32 15C32 20 28 22.500 24 22C20 22 18 21 18 20C19.500 19 20 17 19 14.500C18 12 15 10 11 10C5 10 1 13 0 16Z" fill="url(#edgeTop)" />
          <path d="M0 16C2 12 6 9.500 11 9.500C16 9.500 19 12.500 19 15C16 12 12.500 16 13.500 21C14 26 19 29 24 28.500C21 31 18 32 15 32C6 31.500 0 25 0 16Z" fill="url(#edgeLeft)" />
          <path d="M13 15C8.500 18 8 25 12.500 29C15 31.800 20 32 23 30.500C26.500 29 28.500 27 30 24.500C30 23.500 29 24 28 24.500C24 26.500 18 26 15.500 22.500C13.500 20 13 18 13 15Z" fill="#12478f" />
        </svg>
      </TaskButton>
      <TaskButton $state="active" aria-label="Word">
        <svg width="30" height="30" viewBox="0 0 30 30">
          <path d="M17 4H29V26H17Z" fill="#fff" stroke={BLUE} />
          <path d="M18 7.500H27M18 10.500H27M18 13.500H27M18 16.500H27M18 19.500H27M18 22.500H27" stroke={BLUE} strokeWidth="1.200" />
          <path d="M0 3L18 0V30L0 27Z" fill={BLUE} />
          <path d="M4 10.500L6.300 19.500L9 11L11.700 19.500L14 10.500" fill="none" stroke="#fff" strokeWidth="2" />
        </svg>
      </TaskButton>
      <StackEdge />
      <StackEdge />
      <Tray>
        <PlainButton aria-label="Show hidden icons">
          <svg width="9" height="6" viewBox="0 0 9 6"><path d="M.5 5.500L4.500 .7L8.500 5.500Z" fill="#fff" stroke="#6e4b48" strokeWidth=".7" /></svg>
        </PlainButton>
        <svg width="17" height="17" viewBox="0 0 17 17" role="img" aria-label="Battery">
          <path d="M8 2H10V1H14V2H16V15H8Z" fill="#9c8480" stroke="#4a3634" />
          <path d="M10 5H14V9H10Z" fill="#7a6562" />
          <path d="M2 0V4M5 0V4" stroke="#fff" strokeWidth="1.500" />
          <path d="M.5 4H6.500V8L5 9.500V16H2.500V9.500L.5 8Z" fill="#fff" stroke="#4a3634" strokeWidth=".8" />
          <path d="M9 9.500L15.500 16M15.500 9.500L9 16" stroke="#d81e28" strokeWidth="2" />
        </svg>
        <svg width="17" height="13" viewBox="0 0 17 13" stroke="#54403d" strokeWidth=".8" role="img" aria-label="Network">
          <path d="M.5 9.500H3V12.500H.5ZM3.800 7.500H6.300V12.500H3.800ZM7 5.500H9.500V12.500H7Z" fill="#fff" />
          <path d="M10.300 3H12.800V12.500H10.300ZM13.500 .5H16.200V12.500H13.500Z" fill="#8d7773" />
        </svg>
        <svg width="9" height="15" viewBox="0 0 9 15" role="img" aria-label="Volume">
          <path d="M.5 4.500H3.500L7.500 .7V14.300L3.500 10.500H.5Z" fill="#fff" stroke="#54403d" strokeWidth=".9" />
        </svg>
        <Clock>
          12:15 AM
          <br />
          8/27/2025
        </Clock>
      </Tray>
    </Taskbar>
  );
}

export default function App() {
  return (
    <Window>
      <Global />
      <TopBar />
      <Tabs />
      <Ribbon>
        <Clipboard />
        <FontGroup />
        <ParagraphGroup />
        <StylesGroup />
        <EditingGroup />
        <CollapseArea>
          <PlainButton aria-label="Collapse ribbon">
            <svg width="9" height="6" viewBox="0 0 9 6"><path d="M1 5L4.500 1.500L8 5" fill="none" stroke={GREY} strokeWidth="2" /></svg>
          </PlainButton>
        </CollapseArea>
      </Ribbon>
      <Workspace>
        <LeftRail>
          <TabCorner>
            <TabSelector aria-label="Tab stop type">
              <svg width="6" height="6" viewBox="0 0 6 6"><path d="M0 0H2V4H6V6H0Z" fill={GREY} /></svg>
            </TabSelector>
          </TabCorner>
          <VerticalRulerBox>
            <VerticalRuler />
          </VerticalRulerBox>
        </LeftRail>
        <DocumentColumn>
          <RulerRow>
            <HorizontalRuler />
          </RulerRow>
          <Sheet $tail />
          <Sheet>
            <Diagram />
          </Sheet>
        </DocumentColumn>
        <ScrollColumn>
          <ScrollButton aria-label="Scroll up">
            <svg width="7" height="4" viewBox="0 0 7 4"><path d="M0 4H7L3.500 0Z" fill={GREY} /></svg>
          </ScrollButton>
          <ScrollTrack>
            <ScrollGap $grow={242} />
            <ScrollThumb />
            <ScrollGap $grow={155} />
          </ScrollTrack>
          <ScrollButton aria-label="Scroll down">
            <svg width="7" height="4" viewBox="0 0 7 4"><path d="M0 0H7L3.500 4Z" fill={GREY} /></svg>
          </ScrollButton>
        </ScrollColumn>
      </Workspace>
      <Status />
      <WindowsTaskbar />
    </Window>
  );
}
